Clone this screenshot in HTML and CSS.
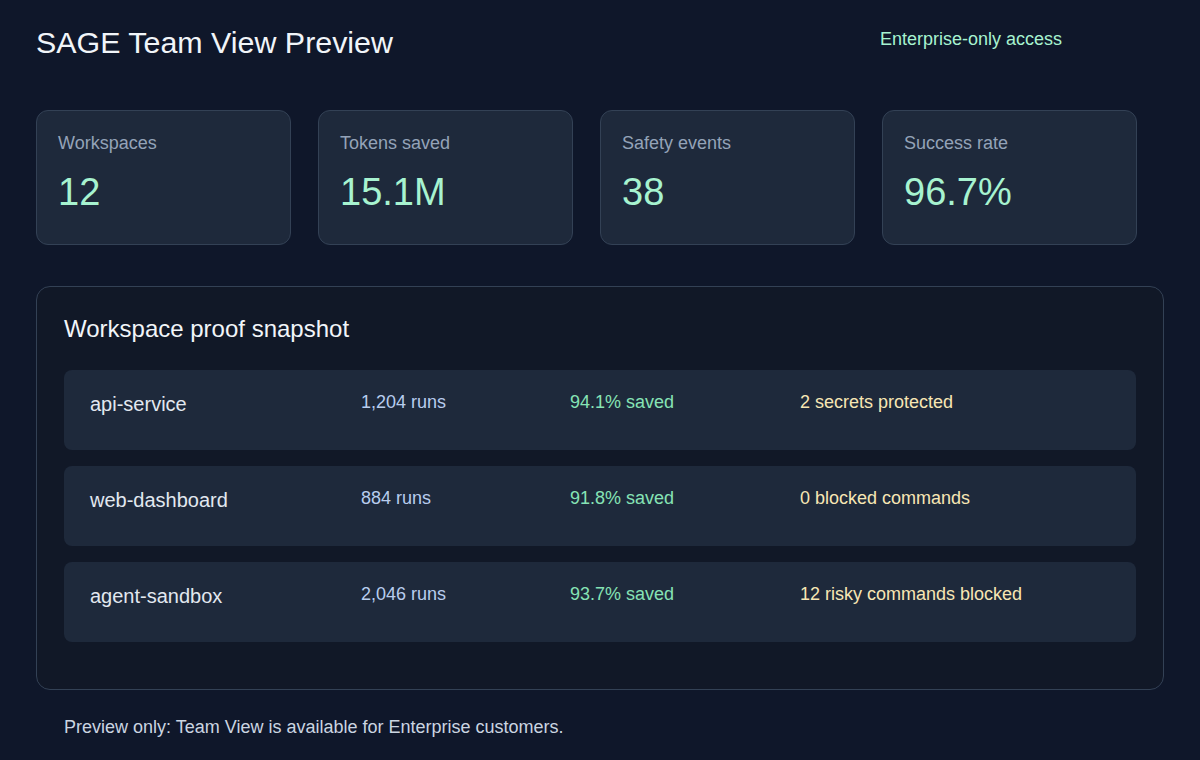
FILE: index.html
```html
<!DOCTYPE html>
<html lang="en">
<head>
    <meta charset="UTF-8">
    <meta name="viewport" content="width=device-width, initial-scale=1.0">
    <title>SAGE Team View Preview</title>
    <link rel="stylesheet" href="styles.css">
</head>
<body>
    <div class="page">
        <header class="header">
            <h1 class="title">SAGE Team View Preview</h1>
            <span class="access">Enterprise-only access</span>
        </header>

        <section class="stats">
            <div class="stat-card">
                <div class="stat-label">Workspaces</div>
                <div class="stat-value">12</div>
            </div>
            <div class="stat-card">
                <div class="stat-label">Tokens saved</div>
                <div class="stat-value">15.1M</div>
            </div>
            <div class="stat-card">
                <div class="stat-label">Safety events</div>
                <div class="stat-value">38</div>
            </div>
            <div class="stat-card">
                <div class="stat-label">Success rate</div>
                <div class="stat-value">96.7%</div>
            </div>
        </section>

        <section class="panel">
            <h2 class="panel-title">Workspace proof snapshot</h2>
            <div class="rows">
                <div class="row">
                    <span class="row-name">api-service</span>
                    <span class="row-runs">1,204 runs</span>
                    <span class="row-saved">94.1% saved</span>
                    <span class="row-note">2 secrets protected</span>
                </div>
                <div class="row">
                    <span class="row-name">web-dashboard</span>
                    <span class="row-runs">884 runs</span>
                    <span class="row-saved">91.8% saved</span>
                    <span class="row-note">0 blocked commands</span>
                </div>
                <div class="row">
                    <span class="row-name">agent-sandbox</span>
                    <span class="row-runs">2,046 runs</span>
                    <span class="row-saved">93.7% saved</span>
                    <span class="row-note">12 risky commands blocked</span>
                </div>
            </div>
        </section>

        <p class="footnote">Preview only: Team View is available for Enterprise customers.</p>
    </div>
</body>
</html>
```

FILE: styles.css
```css
:root {
    --bg-page: #0f172a;
    --bg-panel: #111827;
    --bg-card: #1e293b;
    --border: #334155;
    --text-main: #f1f5f9;
    --text-muted: #94a3b8;
    --mint: #a7f3d0;
    --green: #86e3b5;
    --blue: #b8cdee;
    --yellow: #f7e6b4;
}

* {
    margin: 0;
    padding: 0;
    box-sizing: border-box;
}

body {
    font-family: "Liberation Sans", Arial, sans-serif;
    background-color: var(--bg-page);
    color: var(--text-main);
}

.page {
    padding: 24px 36px;
}

.header {
    display: flex;
    justify-content: space-between;
    align-items: center;
    padding-right: 102px;
}

.title {
    font-size: 30.4px;
    font-weight: 400;
    line-height: 1.2;
}

.access {
    font-size: 18px;
    color: var(--mint);
    padding-bottom: 6px;
}

.stats {
    display: grid;
    grid-template-columns: repeat(4, 255px);
    gap: 27px;
    margin-top: 50px;
}

.stat-card {
    background-color: var(--bg-card);
    border: 1px solid var(--border);
    border-radius: 12px;
    height: 135px;
    padding: 22px 21px;
}

.stat-label {
    font-size: 18px;
    line-height: 1.2;
    color: var(--text-muted);
}

.stat-value {
    font-size: 38px;
    line-height: 1.2;
    color: var(--mint);
    margin-top: 15px;
}

.panel {
    margin-top: 41px;
    background-color: var(--bg-panel);
    border: 1px solid var(--border);
    border-radius: 14px;
    padding: 28px 27px 47px;
}

.panel-title {
    font-size: 24px;
    font-weight: 400;
    line-height: 1.2;
}

.rows {
    display: flex;
    flex-direction: column;
    gap: 16px;
    margin-top: 26px;
}

.row {
    display: grid;
    grid-template-columns: 271px 209px 230px 1fr;
    align-items: start;
    height: 80px;
    padding: 19px 26px;
    background-color: var(--bg-card);
    border-radius: 8px;
    line-height: 1.5;
    font-size: 18px;
}

.row-name {
    font-size: 20px;
    color: #e2e8f0;
}

.row-runs {
    color: var(--blue);
}

.row-saved {
    color: var(--green);
}

.row-note {
    color: var(--yellow);
}

.footnote {
    margin-top: 24px;
    padding-left: 28px;
    font-size: 18px;
    line-height: 1.5;
    color: #cbd5e1;
}
```
